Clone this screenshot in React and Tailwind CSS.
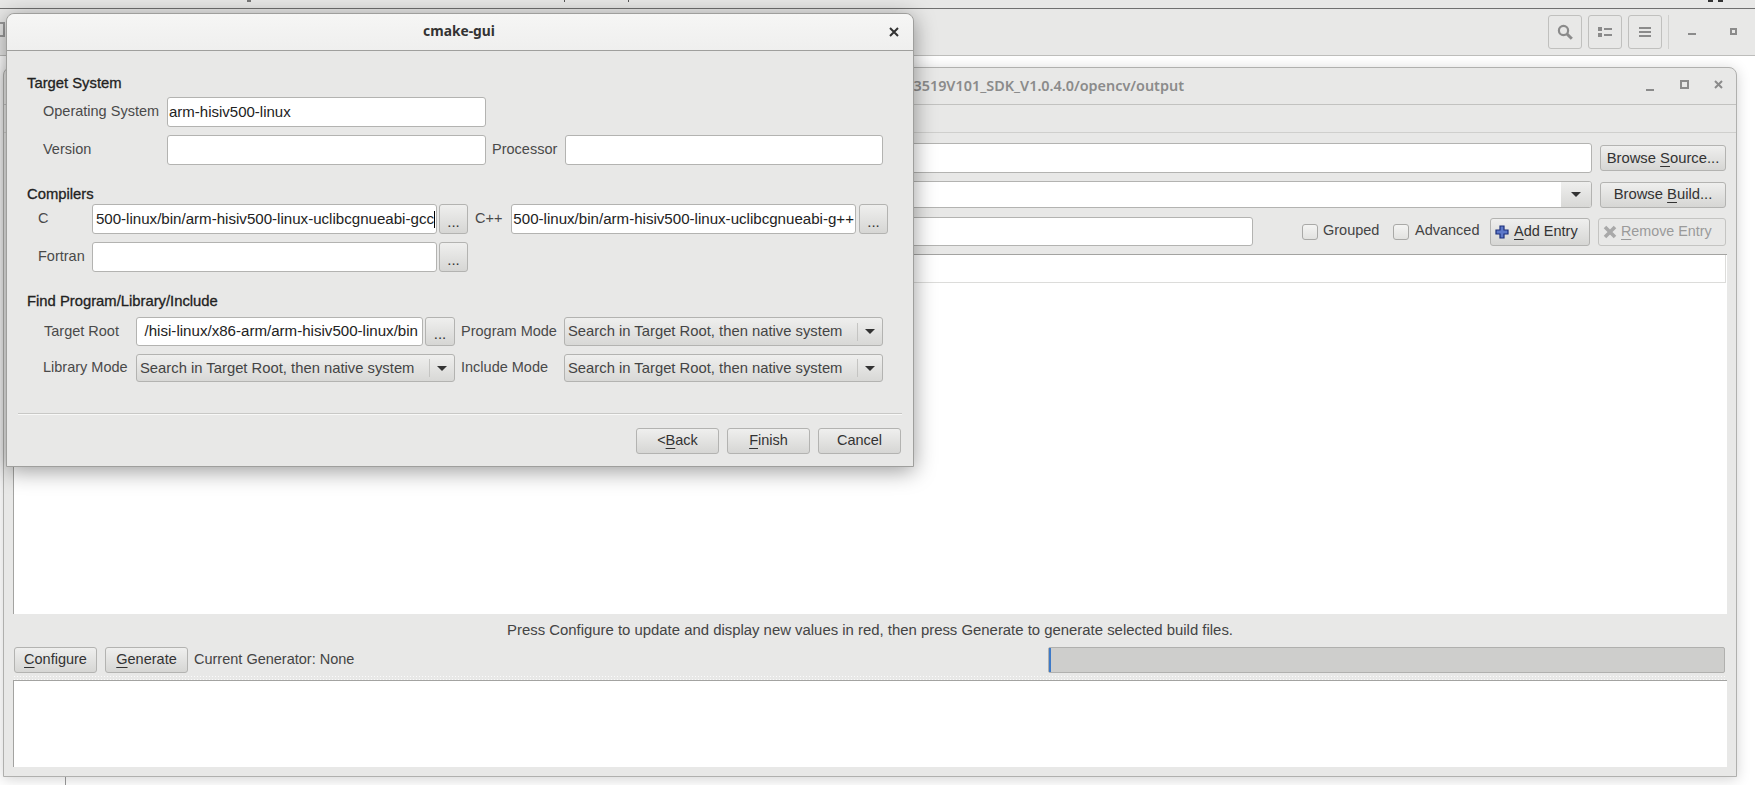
const pressBtn = 'flex items-center justify-center shrink-0 rounded-[3px] border border-[#b3b3b1] bg-gradient-to-b from-[#efefee] to-[#d6d6d4] text-[#333]'

function Mn({ children }) {
  return <span className="underline underline-offset-[3px] decoration-1">{children}</span>
}

function Field({ w, h = 'h-full', text, caret, right, pad = 'pr-[1px]' }) {
  return (
    <div className={`${w} ${h} shrink-0 flex items-center overflow-hidden rounded-[3px] border border-[#b3b3b1] bg-white text-[#222] whitespace-nowrap ${right ? `justify-end text-[15.1px] ${pad}` : 'pl-[1px] text-[15px]'}`}>
      {text && <span className="min-w-0">{text}</span>}
      {caret && <span className="shrink-0 w-px h-[17px] bg-black" />}
    </div>
  )
}

function Combo({ w }) {
  return (
    <div className={`${w} h-full shrink-0 flex items-center rounded-[3px] border border-[#b3b3b1] bg-gradient-to-b from-[#efefee] to-[#d8d8d6] text-[14.8px] text-[#444] whitespace-nowrap pl-[3px]`}>
      <span className="flex-1 overflow-hidden">Search in Target Root, then native system</span>
      <span className="w-px h-[18px] bg-[#c4c4c2]" />
      <Caret className="mx-[7px]" />
    </div>
  )
}

function Caret({ className = '' }) {
  return <span className={`shrink-0 w-0 h-0 border-x-[5px] border-x-transparent border-t-[5px] border-t-[#333] ${className}`} />
}

function Dots({ className = '' }) {
  return <button className={`${pressBtn} items-end pb-[4px] leading-none text-[15px] ${className}`}>...</button>
}

function Label({ w, className = '', children }) {
  return <span className={`${w} shrink-0 text-[#4a4a4a] whitespace-nowrap ${className}`}>{children}</span>
}

function Heading({ className = '', children }) {
  return <div className={`h-5 leading-5 text-[14.8px] text-[#222] [-webkit-text-stroke:0.3px_#222] ${className}`}>{children}</div>
}

function Check({ label, w, gap }) {
  return (
    <div className="flex items-center shrink-0">
      <span className="w-4 h-4 rounded-[3px] border border-[#a9a9a7] bg-gradient-to-b from-[#f4f4f3] to-[#e2e2e0]" />
      <span className={`${w} ${gap} text-[#444] -mt-[2px]`}>{label}</span>
    </div>
  )
}

function WinControls() {
  return (
    <svg width="78" height="14" viewBox="0 0 78 14" className="text-[#8b8b8b]">
      <rect x="0" y="9" width="8" height="2" fill="currentColor" />
      <rect x="35" y="1" width="7" height="7" fill="none" stroke="currentColor" strokeWidth="2" />
      <path d="M69 1l7 7M76 1l-7 7" stroke="currentColor" strokeWidth="2" />
    </svg>
  )
}

function BackWindow() {
  return (
    <div className="flex flex-col h-full">
      <div className="h-[9px] shrink-0 flex border-b border-[#707070] bg-[#e8e8e7]">
        <span className="ml-[247px] w-[4px] h-[2px] bg-[#777]" />
        <span className="ml-[313px] w-px h-[2px] bg-[#555]" />
        <span className="ml-[63px] w-px h-[2px] bg-[#555]" />
        <span className="ml-[1079px] w-[5px] h-[2px] bg-[#333]" />
        <span className="ml-[5px] w-[5px] h-[2px] bg-[#333]" />
      </div>
      <div className="h-[47px] shrink-0 flex items-center border-b border-[#bdbdbb] bg-[#e8e8e7] text-[#8b8b8b]">
        <span className="w-[5px] h-[15px] -mt-[6px] border-y-2 border-r-2 border-[#9a9a9a]" />
        <div className="ml-auto flex items-center gap-[6px]">
          <button className="w-[34px] h-[34px] flex items-center justify-center rounded-[3px] border border-[#c0c0be]">
            <svg width="16" height="16" viewBox="0 0 16 16" fill="none" stroke="currentColor">
              <circle cx="6.5" cy="6.5" r="4.6" strokeWidth="2.2" />
              <path d="M10 10l4.8 4.8" strokeWidth="3" />
            </svg>
          </button>
          <button className="w-[34px] h-[34px] flex items-center justify-center rounded-[3px] border border-[#c0c0be]">
            <svg width="14" height="12" viewBox="0 0 14 12" fill="currentColor">
              <rect x="0" y="1" width="4" height="4" />
              <rect x="0" y="7" width="4" height="4" />
              <rect x="6" y="2" width="8" height="2" />
              <rect x="6" y="8" width="8" height="2" />
            </svg>
          </button>
          <button className="w-[34px] h-[34px] flex items-center justify-center rounded-[3px] border border-[#c0c0be]">
            <svg width="12" height="12" viewBox="0 0 12 12" fill="currentColor">
              <rect y="1" width="12" height="2" />
              <rect y="5" width="12" height="2" />
              <rect y="9" width="12" height="2" />
            </svg>
          </button>
          <span className="w-px h-[34px] bg-[#d0d0ce]" />
        </div>
        <span className="ml-[19px] mt-[3px] w-2 h-[2px] bg-[#8b8b8b]" />
        <span className="ml-[34px] mr-[18px] w-[7px] h-[7px] -mt-[1px] border-2 border-[#8b8b8b]" />
      </div>
      <div className="flex-1 bg-white flex items-end">
        <span className="ml-[65px] w-px h-[10px] bg-[#9a9a9a]" />
      </div>
    </div>
  )
}

function MainWindow() {
  return (
    <div className="absolute left-[3px] top-[67px] w-[1734px] h-[710px] flex flex-col rounded-t-[8px] border border-[#b0b0ae] bg-[#e8e8e7] shadow-[0_2px_14px_rgba(0,0,0,0.18)] text-[14.5px]">
      <div className="h-[37px] shrink-0 flex items-center border-b border-[#c2c2c0]">
        <span className="ml-[897px] mr-auto w-[283px] -mt-[1px] flex justify-end whitespace-nowrap font-['Noto_Sans',sans-serif] font-semibold text-[14.4px] text-[#8b8b8b]">
          Hi3519V101_SDK_V1.0.4.0/opencv/output
        </span>
        <span className="mr-[12px] mt-[2px] flex"><WinControls /></span>
      </div>
      <div className="h-[28px] shrink-0 border-b border-[#cfcfcd]" />

      <div className="mt-[10px] h-[30px] shrink-0 flex items-center pl-[189px] pr-[10px]">
        <div className="flex-1 h-full rounded-[3px] border border-[#b3b3b1] bg-white" />
        <button className={`${pressBtn} ml-[8px] w-[126px] h-[26px] text-[14.8px]`}><span>Browse <Mn>S</Mn>ource...</span></button>
      </div>
      <div className="mt-[8px] h-[27px] shrink-0 flex items-center pl-[189px] pr-[10px]">
        <div className="flex-1 h-full flex justify-end rounded-[3px] border border-[#b3b3b1] bg-white overflow-hidden">
          <span className="w-[30px] flex items-center justify-center bg-gradient-to-b from-[#efefee] to-[#d8d8d6]"><Caret /></span>
        </div>
        <button className={`${pressBtn} ml-[8px] w-[126px] h-[26px] text-[14.8px]`}><span>Browse <Mn>B</Mn>uild...</span></button>
      </div>
      <div className="mt-[9px] h-[29px] shrink-0 flex items-center pl-[69px] pr-[10px]">
        <div className="flex-1 h-full rounded-[3px] border border-[#b3b3b1] bg-white" />
        <div className="ml-[49px] flex items-center">
          <Check label="Grouped" w="w-[70px]" gap="ml-[5px]" />
          <Check label="Advanced" w="w-[75px]" gap="ml-[6px]" />
        </div>
        <button className={`${pressBtn} w-[100px] h-[28px] gap-[5px] !justify-start pl-[4px]`}>
          <svg width="14" height="14" viewBox="0 0 14 14">
            <path d="M5 1h4v4h4v4H9v4H5V9H1V5h4z" fill="#5d78c9" stroke="#1c2f7a" strokeWidth="1.2" />
          </svg>
          <span><Mn>A</Mn>dd Entry</span>
        </button>
        <button className="ml-[8px] w-[128px] h-[28px] shrink-0 flex items-center gap-[4px] pl-[4px] rounded-[3px] border border-[#c4c4c2] text-[14.3px] text-[#9a9a9a]">
          <svg width="14" height="14" viewBox="0 0 14 14">
            <path d="M2 2l10 10M12 2L2 12" stroke="#a9a9a9" strokeWidth="3.6" />
          </svg>
          <span><Mn>R</Mn>emove Entry</span>
        </button>
      </div>

      <div className="mt-[8px] h-[360px] shrink-0 ml-[9px] mr-[9px] flex flex-col border-t border-l border-[#a3a3a1] bg-white">
        <div className="h-[28px] shrink-0 mr-[1px] border-b border-r border-[#dcdcda]" />
      </div>

      <div className="h-[33px] shrink-0 flex items-center justify-center text-[#444] text-[14.9px]">
        Press Configure to update and display new values in red, then press Generate to generate selected build files.
      </div>
      <div className="h-[26px] shrink-0 flex items-center pl-[10px] pr-[11px]">
        <button className={`${pressBtn} w-[83px] h-full`}><span><Mn>C</Mn>onfigure</span></button>
        <button className={`${pressBtn} ml-[8px] w-[83px] h-full`}><span><Mn>G</Mn>enerate</span></button>
        <span className="ml-[6px] text-[#444]">Current Generator: None</span>
        <div className="ml-auto w-[677px] h-full flex rounded-[2px] border border-[#b0b0ae] bg-[#cececc]">
          <span className="w-[2px] h-full bg-[#3e7ac8]" />
        </div>
      </div>
      <div className="mt-[2px] h-[5px] shrink-0 mx-[9px] bg-[radial-gradient(circle,#fbfbfb_0.8px,transparent_1px)] bg-[length:3px_3px]" />
      <div className="h-[87px] shrink-0 mx-[9px] border-t border-l border-[#a3a3a1] bg-white" />
    </div>
  )
}

function Dialog() {
  return (
    <div className="absolute left-[6px] top-[13px] w-[908px] h-[454px] flex flex-col rounded-t-[8px] border border-[#9f9f9d] bg-[#e8e8e7] shadow-[0_4px_22px_rgba(0,0,0,0.4)] text-[14.5px]">
      <div className="h-[37px] shrink-0 flex items-center rounded-t-[8px] border-b border-[#9f9f9d] bg-gradient-to-b from-[#f6f6f5] to-[#efefee]">
        <span className="flex-1 text-center pl-[22px] -mt-[1px] font-['Noto_Sans',sans-serif] font-bold text-[13.8px] text-[#333]">cmake-gui</span>
        <svg width="10" height="10" viewBox="0 0 10 10" className="mr-[14px] text-[#333]">
          <path d="M1 1l8 8M9 1l-8 8" stroke="currentColor" strokeWidth="2" />
        </svg>
      </div>
      <div className="pl-[20px] pt-[22px] flex flex-col">
        <Heading>Target System</Heading>
        <div className="mt-[4px] h-[30px] flex items-center pl-[16px]">
          <Label w="w-[124px]">Operating System</Label>
          <Field w="w-[319px]" text="arm-hisiv500-linux" />
        </div>
        <div className="mt-[8px] h-[30px] flex items-center pl-[16px]">
          <Label w="w-[124px]">Version</Label>
          <Field w="w-[319px]" />
          <Label w="w-[73px]" className="ml-[6px]">Processor</Label>
          <Field w="w-[318px]" />
        </div>

        <Heading className="mt-[19px]">Compilers</Heading>
        <div className="h-[30px] flex items-center pl-[11px]">
          <Label w="w-[54px]">C</Label>
          <Field w="w-[345px]" right caret text="500-linux/bin/arm-hisiv500-linux-uclibcgnueabi-gcc" />
          <Dots className="ml-[2px] w-[29px] h-full" />
          <Label w="w-[36px]" className="ml-[7px]">C++</Label>
          <Field w="w-[345px]" right text="500-linux/bin/arm-hisiv500-linux-uclibcgnueabi-g++" />
          <Dots className="ml-[3px] w-[29px] h-full" />
        </div>
        <div className="mt-[8px] h-[30px] flex items-center pl-[11px]">
          <Label w="w-[54px]">Fortran</Label>
          <Field w="w-[345px]" />
          <Dots className="ml-[2px] w-[29px] h-full" />
        </div>

        <Heading className="mt-[19px]">Find Program/Library/Include</Heading>
        <div className="mt-[6px] h-[29px] flex items-center pl-[17px]">
          <Label w="w-[92px]">Target Root</Label>
          <Field w="w-[287px]" right pad="pr-[4px]" text="/hisi-linux/x86-arm/arm-hisiv500-linux/bin" />
          <Dots className="ml-[2px] w-[30px] h-full" />
          <Label w="w-[103px]" className="ml-[6px]">Program Mode</Label>
          <Combo w="w-[319px]" />
        </div>
        <div className="mt-[8px] h-[28px] flex items-center pl-[16px]">
          <Label w="w-[93px]">Library Mode</Label>
          <Combo w="w-[319px]" />
          <Label w="w-[103px]" className="ml-[6px]">Include Mode</Label>
          <Combo w="w-[319px]" />
        </div>
      </div>
      <div className="mt-[32px] ml-[11px] mr-[11px] h-px shrink-0 bg-[#f8f8f7] shadow-[0_-1px_0_#c8c8c6]" />
      <div className="mt-[13px] h-[26px] flex justify-end gap-[8px] pr-[12px]">
        <button className={`${pressBtn} w-[83px]`}><span>&lt;<Mn>B</Mn>ack</span></button>
        <button className={`${pressBtn} w-[83px]`}><span><Mn>F</Mn>inish</span></button>
        <button className={`${pressBtn} w-[83px]`}>Cancel</button>
      </div>
    </div>
  )
}

export default function App() {
  return (
    <div className="relative w-[1755px] h-[785px] overflow-hidden bg-white font-['Liberation_Sans',sans-serif]">
      <BackWindow />
      <MainWindow />
      <Dialog />
    </div>
  )
}
